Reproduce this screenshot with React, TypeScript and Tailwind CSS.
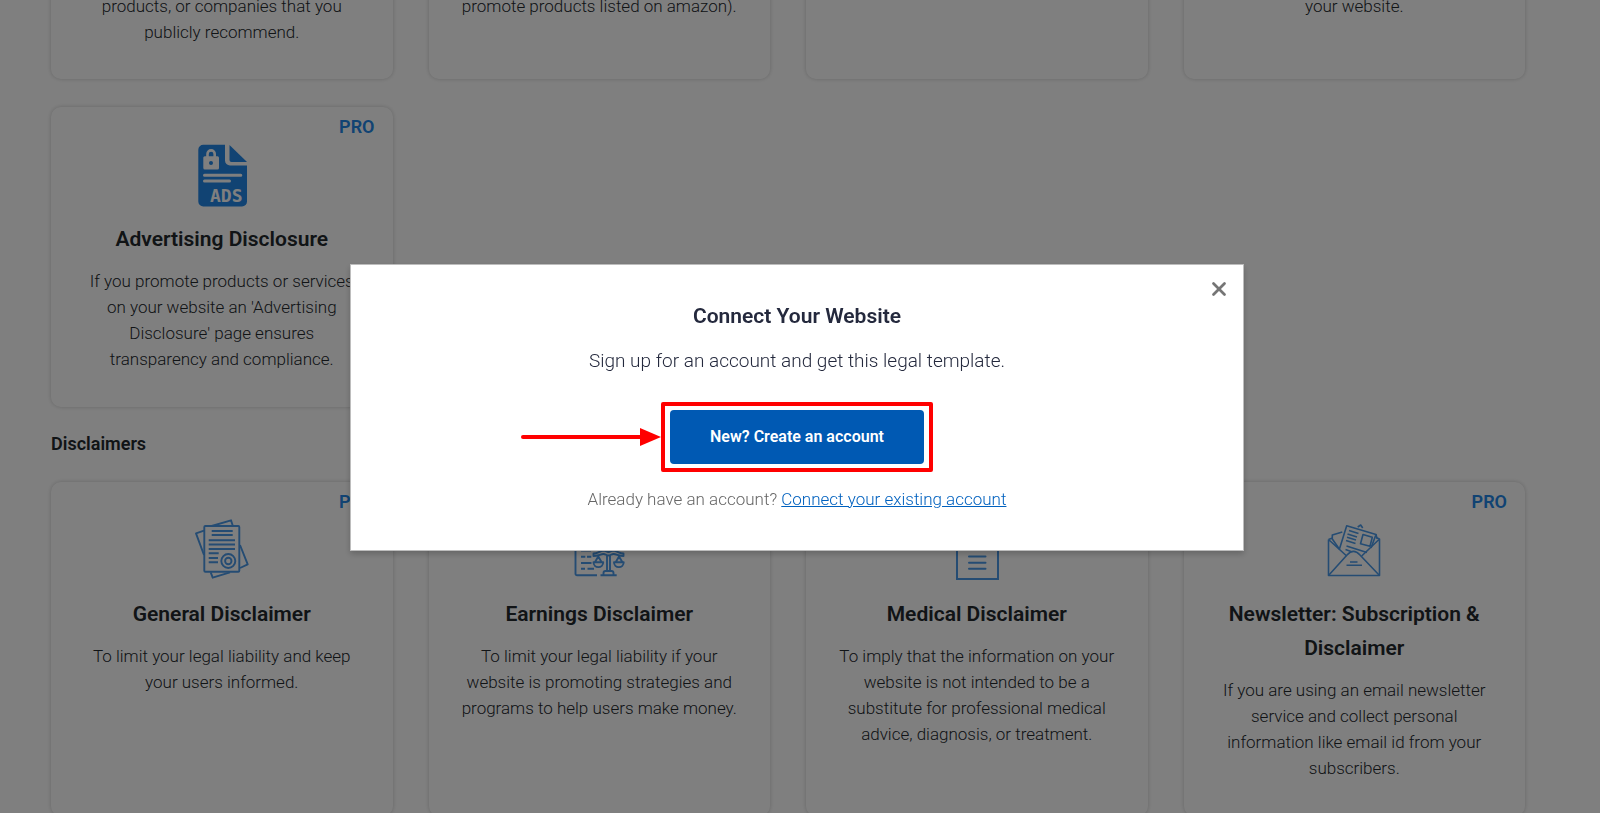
import type { ReactNode } from "react";
import { X } from "lucide-react";

interface ITemplateCard {
  title: string;
  description: string;
  icon: ReactNode;
  pro?: boolean;
}

function AdsIcon() {
  return (
    <svg viewBox="0 0 64 64" className="size-16" aria-hidden="true">
      <path
        d="M13 1.7H35V17.5a5 5 0 0 0 5 5H57V58.5a5 5 0 0 1-5 5H13.300a5 5 0 0 1-5-5V6.700a5 5 0 0 1 5-5Z"
        fill="#2286e6"
      />
      <path d="M39.500 2 57 19H41.500a2 2 0 0 1-2-2Z" fill="#2286e6" />
      <path d="M17.500 14V11a3.600 3.600 0 0 1 7.200 0v3" fill="none" stroke="#fff" strokeWidth="2.600" />
      <rect x="13.300" y="13.300" width="15.700" height="13.300" rx="1.500" fill="#fff" />
      <circle cx="21" cy="20" r="2" fill="#2286e6" />
      <path d="M14.500 32.300H50.800M14.500 38H39.500" stroke="#fff" strokeWidth="3" strokeLinecap="round" />
      <text x="20" y="58.500" fill="#fff" fontFamily="DejaVu Sans Mono, monospace" fontWeight="700" fontSize="18">ADS</text>
    </svg>
  );
}

function DocumentsIcon() {
  return (
    <svg viewBox="0 0 64 64" className="size-16" fill="none" stroke="#4a98e6" strokeWidth="1.900" strokeLinejoin="round" aria-hidden="true">
      <rect x="14.300" y="8" width="35" height="45.700" rx="1" />
      <path d="M42.700 7.500 41 2.300 21.700 8M14 12.700 6 15.300l8 21.700M50 27l7.700 19.300L50 50M20.700 54.300l2 5.400L40 54.300" />
      <path d="M21.700 13H42.700M21.700 17H42.700M18.700 22.300H45M18.700 26.500H45M18.700 31H45M18.700 35.300H28.700M18.700 40H28M18.700 44.300H28" />
      <circle cx="38.300" cy="43" r="7" />
      <circle cx="38.300" cy="43" r="3.200" />
    </svg>
  );
}

function ScalesIcon() {
  return (
    <svg viewBox="0 0 64 64" className="size-16" fill="none" stroke="#4a98e6" strokeWidth="1.900" strokeLinejoin="round" aria-hidden="true">
      <path d="M30 57.300H10a1.500 1.500 0 0 1-1.500-1.500V8H44V26" />
      <path d="M14 38.700h4.300M20 38.700h4.300M14 45h10.500M14 50.700h4M20.500 50.700h6.500M14 32.500h10M14 26h10" />
      <path d="M26.500 35.500c4 0 6-2.500 10-3 2 0 3 1.500 5 1.500s3-1.500 5-1.500c4 .5 6 3 10 3v2.500c-5 0-7-2-10-2-2 0-3 1.500-5 1.500s-3-1.500-5-1.500c-3 0-5 2-10 2Z" />
      <path d="M40 37.500V53M43 37.500V53M36.500 57.300V55a2 2 0 0 1 2-2h6a2 2 0 0 1 2 2v2.300M33.500 57.300H49.700" />
      <path d="M31.300 38.500 28 44M31.300 38.500 34.500 44M26.500 44.300h9.700a4.800 4.800 0 0 1-9.700 0ZM52 38.500 48.800 44M52 38.500 55.300 44M47 44.300h9.700a4.800 4.800 0 0 1-9.700 0Z" />
    </svg>
  );
}

function MedicalIcon() {
  return (
    <svg viewBox="0 0 64 64" className="size-16" fill="none" stroke="#4a98e6" strokeWidth="2" aria-hidden="true">
      <path d="M12 4H53V61H12Z" />
      <path d="M24 38.500H40.500M24 44.700H40.500M24 50.700H40.500M32 12v16M24 20h16" strokeLinecap="round" />
    </svg>
  );
}

function NewsletterIcon() {
  return (
    <svg viewBox="0 0 64 64" className="size-16" fill="none" stroke="#4a98e6" strokeWidth="1.600" strokeLinejoin="round" aria-hidden="true">
      <path d="M6.500 21.500V57.500H57.500V21L39.700 38M6.500 21.500 24.700 38M6.500 21.500l4-1.500M57.500 21l-3.500-1.500" />
      <path d="M6.500 57.500 25 37c4.500-4.800 8.500-4.800 13 0L57.500 57.500" />
      <path d="M20.300 14 10.300 17v4l7 10M17.300 31.500 24.700 7.700 54 16.500 49 30M54 16.500l1 4M35.700 9 38.700 7l2 3" />
      <path d="M27 12.500l9.500 3M25.500 16l9.500 3M25 19.300l9 2.800M24 22.500l9.500 3M24.500 28 45 34.500M23.500 31.500l5.500 2" />
      <path d="M41 16.500l9.300 2.800-2.300 9-9.500-2.600ZM28 44H35.500M24.500 47.300H40" />
    </svg>
  );
}

// lower part of the list that is scrolled past the top edge
const scrolledCards: string[] = [
  "products, or companies that you publicly recommend.",
  "promote products listed on amazon).",
  "",
  "your website.",
];

const disclosures: ITemplateCard[] = [
  {
    title: "Advertising Disclosure",
    description: "If you promote products or services on your website an 'Advertising Disclosure' page ensures transparency and compliance.",
    icon: <AdsIcon />,
    pro: true,
  },
];

const disclaimers: ITemplateCard[] = [
  {
    title: "General Disclaimer",
    description: "To limit your legal liability and keep your users informed.",
    icon: <DocumentsIcon />,
    pro: true,
  },
  {
    title: "Earnings Disclaimer",
    description: "To limit your legal liability if your website is promoting strategies and programs to help users make money.",
    icon: <ScalesIcon />,
  },
  {
    title: "Medical Disclaimer",
    description: "To imply that the information on your website is not intended to be a substitute for professional medical advice, diagnosis, or treatment.",
    icon: <MedicalIcon />,
  },
  {
    title: "Newsletter: Subscription & Disclaimer",
    description: "If you are using an email newsletter service and collect personal information like email id from your subscribers.",
    icon: <NewsletterIcon />,
    pro: true,
  },
];

function TemplateCard(props: { card: ITemplateCard }) {
  const { card } = props;

  return (
    <article className="relative flex flex-col items-center rounded-[10px] bg-white px-8 pt-9 pb-[35px] text-center shadow-[0_0_4px_rgba(0,0,0,0.2)]">
      { card.pro && <span className="absolute top-[7px] right-[18px] text-lg leading-[26px] font-semibold text-[#2286e6]">PRO</span> }
      { card.icon }
      <h3 className="mt-[15px] text-[21px] leading-[34px] font-semibold text-[#23282d]">{ card.title }</h3>
      <p className="mt-3 text-[17px] leading-[26px] font-light">{ card.description }</p>
    </article>
  );
}

function ConnectDialog() {
  return (
    <div className="fixed inset-0 flex items-center justify-center bg-black/50 pt-0.5 pr-1.5">
      <div
        role="dialog"
        aria-modal="true"
        aria-labelledby="connect-title"
        className="relative flex w-full max-w-[894px] flex-col items-center border border-[#bdbdbd] bg-white pt-[37px] pb-[39px] shadow-[0_3px_6px_rgba(0,0,0,0.2)]"
      >
        <button type="button" aria-label="Close" className="absolute top-3 right-3 cursor-pointer text-[#757575]">
          <X className="size-6 p-px" strokeWidth={ 3 } />
        </button>
        <h2 id="connect-title" className="text-[21px] leading-7 font-semibold text-[#24293d]">Connect Your Website</h2>
        <p className="mt-[18px] text-[19px] leading-[26px] font-light text-[#24293d]">Sign up for an account and get this legal template.</p>
        <div className="relative mt-7 rounded-xs border-4 border-[#ff0000] px-[5px] py-1">
          <svg viewBox="0 0 140 18" className="absolute top-1/2 right-full mr-1 h-[18px] w-[140px] -translate-y-1/2" aria-hidden="true">
            <path d="M2 9H122" stroke="#ff0000" strokeWidth="4" strokeLinecap="round" />
            <path d="M119 0 140 9 119 18Z" fill="#ff0000" />
          </svg>
          <button type="button" className="cursor-pointer rounded bg-[#0059b3] px-10 py-[15px] text-base leading-6 font-semibold text-white">
            New? Create an account
          </button>
        </div>
        <p className="mt-[15px] text-[17px] leading-6 font-light text-[#666666]">
          Already have an account? <a href="#connect" className="text-[#0061bf] underline">Connect your existing account</a>
        </p>
      </div>
    </div>
  );
}

export default function App() {
  return (
    <div className="h-screen overflow-hidden bg-white font-['Roboto',sans-serif] text-[#23282d]">
      <main className="-mt-[7px] pr-[75px] pl-[51px]">
        <div className="grid grid-cols-4 gap-x-9">
          {
            scrolledCards.map((text: string, index: number) => (
              <article
                className="rounded-b-[10px] bg-white px-8 pb-[34px] text-center shadow-[0_0_4px_rgba(0,0,0,0.2)]"
                key={ index }
              >
                <p className="text-[17px] leading-[26px] font-light">{ text }</p>
              </article>
            ))
          }
        </div>
        <section className="mt-7 grid grid-cols-4 gap-x-9">
          { disclosures.map((card: ITemplateCard) => <TemplateCard card={ card } key={ card.title } />) }
        </section>
        <h2 className="mt-6 mb-[25px] text-lg leading-[26px] font-semibold text-[#23282d]">Disclaimers</h2>
        <section className="grid grid-cols-4 gap-x-9">
          { disclaimers.map((card: ITemplateCard) => <TemplateCard card={ card } key={ card.title } />) }
        </section>
      </main>
      <ConnectDialog />
    </div>
  );
}
